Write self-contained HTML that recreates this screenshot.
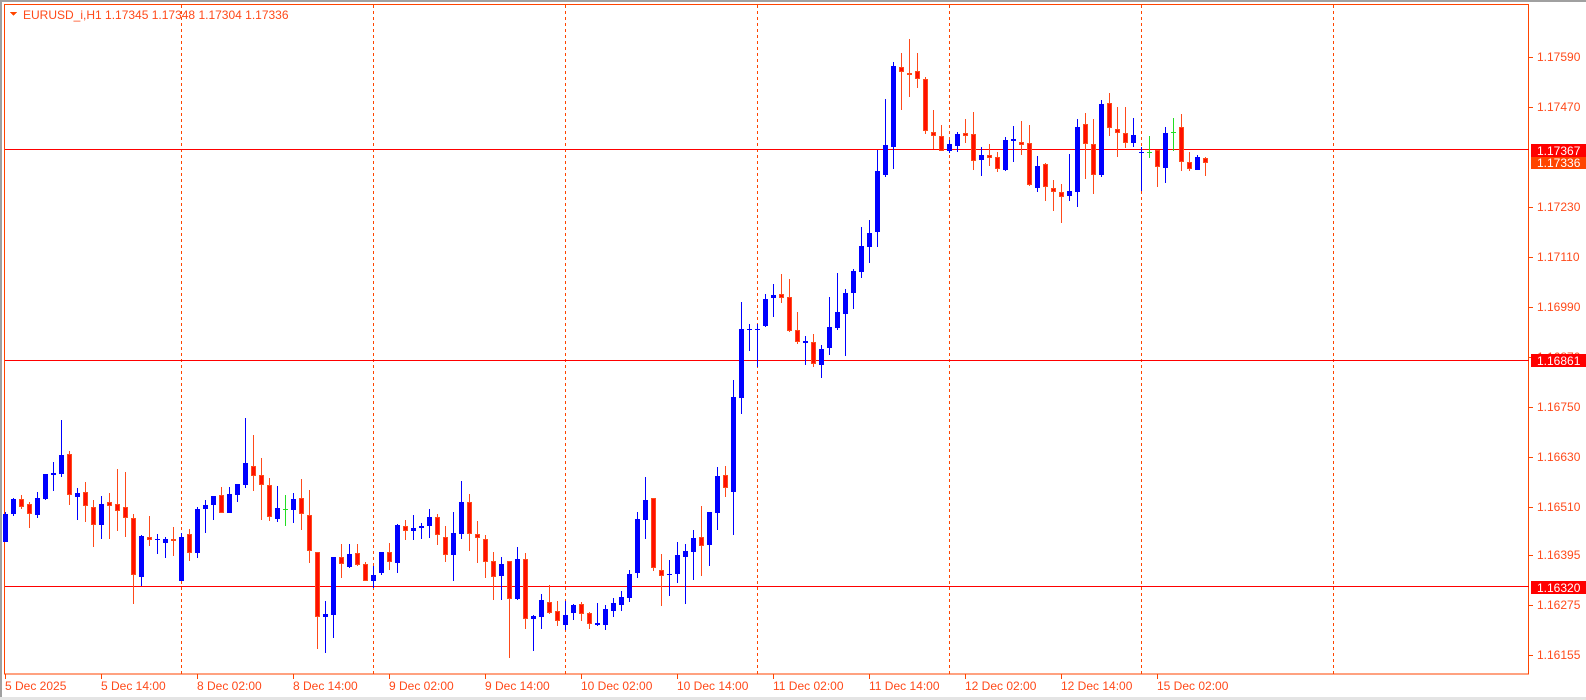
<!DOCTYPE html>
<html><head><meta charset="utf-8">
<style>
html,body{margin:0;padding:0;background:#fff;width:1586px;height:700px;overflow:hidden;}
svg{display:block;}
text{font-family:"Liberation Sans","DejaVu Sans",sans-serif;}
</style></head>
<body>
<svg id="c" width="1586" height="700" xmlns="http://www.w3.org/2000/svg" shape-rendering="crispEdges">
<rect x="0" y="0" width="1586" height="700" fill="#fff"/>
<rect x="0" y="0" width="1586" height="2" fill="#a0a0a0"/>
<rect x="0" y="0" width="2" height="700" fill="#a0a0a0"/>
<rect x="0" y="697" width="1586" height="3" fill="#e4e4e4"/>
<!-- frame -->
<rect x="4.5" y="4.5" width="1524" height="669.5" fill="none" stroke="#ff4500" stroke-width="1"/>
<!-- dashed verticals -->
<g stroke="#ff4500" stroke-width="1" stroke-dasharray="3,3">
<line x1="181.5" y1="5" x2="181.5" y2="674"/>
<line x1="373.5" y1="5" x2="373.5" y2="674"/>
<line x1="565.5" y1="5" x2="565.5" y2="674"/>
<line x1="757.5" y1="5" x2="757.5" y2="674"/>
<line x1="949.5" y1="5" x2="949.5" y2="674"/>
<line x1="1141.5" y1="5" x2="1141.5" y2="674"/>
<line x1="1333.5" y1="5" x2="1333.5" y2="674"/>
</g>
<!-- horizontal lines -->
<g stroke="#ff0000" stroke-width="1">
<line x1="5" y1="149.5" x2="1529" y2="149.5"/>
<line x1="5" y1="360.5" x2="1529" y2="360.5"/>
<line x1="5" y1="586.5" x2="1529" y2="586.5"/>
</g>
<g id="candles"></g>
<!-- title -->
<polygon points="10,12 17,12 13.5,16" fill="#ff4500"/>
<text x="23" y="19" font-size="12" fill="#ff4a1a">EURUSD_i,H1  1.17345 1.17348 1.17304 1.17336</text>
<!-- price axis -->
<g stroke="#ff4500">
<line x1="1529" y1="57.5" x2="1533" y2="57.5"/><line x1="1529" y1="107.5" x2="1533" y2="107.5"/>
<line x1="1529" y1="207.5" x2="1533" y2="207.5"/><line x1="1529" y1="257.5" x2="1533" y2="257.5"/>
<line x1="1529" y1="307.5" x2="1533" y2="307.5"/><line x1="1529" y1="357.5" x2="1533" y2="357.5"/>
<line x1="1529" y1="407.5" x2="1533" y2="407.5"/><line x1="1529" y1="457.5" x2="1533" y2="457.5"/>
<line x1="1529" y1="507.5" x2="1533" y2="507.5"/><line x1="1529" y1="555.5" x2="1533" y2="555.5"/>
<line x1="1529" y1="605.5" x2="1533" y2="605.5"/><line x1="1529" y1="655.5" x2="1533" y2="655.5"/>
</g>
<g font-size="12" fill="#ff4a1a">
<text x="1537" y="61">1.17590</text>
<text x="1537" y="111">1.17470</text>
<text x="1537" y="211">1.17230</text>
<text x="1537" y="261">1.17110</text>
<text x="1537" y="311">1.16990</text>
<text x="1537" y="361">1.16870</text>
<text x="1537" y="411">1.16750</text>
<text x="1537" y="461">1.16630</text>
<text x="1537" y="511">1.16510</text>
<text x="1537" y="559">1.16395</text>
<text x="1537" y="609">1.16275</text>
<text x="1537" y="659">1.16155</text>
</g>
<rect x="1531" y="144" width="55" height="13" fill="#ff0000"/>
<text x="1537" y="155" font-size="12" fill="#fff">1.17367</text>
<rect x="1531" y="157" width="55" height="12" fill="#ff4500"/>
<text x="1537" y="167" font-size="12" fill="#fff">1.17336</text>
<rect x="1531" y="354" width="55" height="13" fill="#ff0000"/>
<text x="1537" y="365" font-size="12" fill="#fff">1.16861</text>
<rect x="1531" y="581" width="55" height="13" fill="#ff0000"/>
<text x="1537" y="592" font-size="12" fill="#fff">1.16320</text>
<!-- time axis -->
<g stroke="#ff4500">
<line x1="5.5" y1="674" x2="5.5" y2="679"/><line x1="101.5" y1="674" x2="101.5" y2="679"/>
<line x1="197.5" y1="674" x2="197.5" y2="679"/><line x1="293.5" y1="674" x2="293.5" y2="679"/>
<line x1="389.5" y1="674" x2="389.5" y2="679"/><line x1="485.5" y1="674" x2="485.5" y2="679"/>
<line x1="581.5" y1="674" x2="581.5" y2="679"/><line x1="677.5" y1="674" x2="677.5" y2="679"/>
<line x1="773.5" y1="674" x2="773.5" y2="679"/><line x1="869.5" y1="674" x2="869.5" y2="679"/>
<line x1="965.5" y1="674" x2="965.5" y2="679"/><line x1="1061.5" y1="674" x2="1061.5" y2="679"/>
<line x1="1157.5" y1="674" x2="1157.5" y2="679"/>
</g>
<g font-size="12" fill="#ff4a1a">
<text x="5" y="690">5 Dec 2025</text>
<text x="101" y="690">5 Dec 14:00</text>
<text x="197" y="690">8 Dec 02:00</text>
<text x="293" y="690">8 Dec 14:00</text>
<text x="389" y="690">9 Dec 02:00</text>
<text x="485" y="690">9 Dec 14:00</text>
<text x="581" y="690">10 Dec 02:00</text>
<text x="677" y="690">10 Dec 14:00</text>
<text x="773" y="690">11 Dec 02:00</text>
<text x="869" y="690">11 Dec 14:00</text>
<text x="965" y="690">12 Dec 02:00</text>
<text x="1061" y="690">12 Dec 14:00</text>
<text x="1157" y="690">15 Dec 02:00</text>
</g>
</svg>
<script>
var D="b512,514,542,542;b498,499,514,516;r495,499,507,509;r502,504,514,528;b492,498,515,518;b474,474,499,500;b462,473,475,491;b420,455,474,477;r451,454,495,505;b488,493,497,520;r482,492,506,522;r500,507,525,547;b496,504,525,539;r493,502,506,539;r469,504,511,531;r472,507,518,537;r514,518,575,604;b535,536,577,586;r516,537,540,546;b534,539,540,554;b537,539,543,558;r527,539,540,556;b533,537,581,581;r529,534,553,561;b507,509,553,558;b500,505,509,533;b496,496,505,520;r487,495,513,513;b487,494,513,513;b484,484,495,502;b418,463,485,488;r435,466,476,491;r458,475,485,520;r478,485,517,521;b486,508,519,522;g495,509,509,526;b493,499,510,523;r479,498,514,530;r490,515,551,563;r552,552,617,649;b601,614,617,653;b557,557,615,638;r544,557,564,578;b544,554,567,568;r544,553,565,566;r562,564,581,581;b566,575,581,588;b552,552,573,575;r543,552,562,570;b524,525,563,573;r520,526,531,540;b515,528,531,540;b523,526,528,539;b509,517,526,538;r514,517,535,545;r526,537,555,562;b512,533,555,581;b481,502,534,539;r494,502,534,551;r521,534,538,563;r535,539,562,578;r552,561,577,600;b557,564,576,600;r561,561,599,658;b547,559,599,600;r553,559,619,629;b615,616,619,651;b594,600,617,629;r585,602,613,614;r601,611,621,626;b601,615,625,630;b604,605,613,620;r602,604,614,621;r612,613,624,629;b603,623,625,626;b605,609,625,630;b598,603,611,617;b591,597,605,611;b570,574,598,602;b512,519,573,578;b477,500,520,539;r498,498,568,571;r554,570,576,606;b560,574,575,596;b542,555,574,583;b544,551,557,604;b530,538,552,580;r506,537,546,576;b512,512,545,566;b467,476,513,530;r466,475,488,497;b380,397,492,535;b302,329,398,414;b324,329,329,351;b324,329,329,367;b294,299,326,327;b284,295,298,317;r274,294,298,303;r279,297,331,332;r312,330,342,344;b336,341,343,365;r334,342,364,367;b345,349,365,378;b297,327,348,355;b273,312,328,330;b289,293,314,356;b269,271,293,309;b227,246,272,278;b220,233,247,263;b150,171,232,247;b99,145,175,177;b62,66,147,169;r53,67,72,110;r39,73,73,97;r53,71,79,88;r77,79,131,134;r110,132,136,149;r125,136,151,151;b140,144,151,153;b132,134,146,152;r119,133,136,143;r112,134,161,170;b147,155,160,176;r144,155,158,166;r152,157,169,172;b137,140,170,171;b126,139,141,162;r121,142,145,155;r125,143,185,186;b156,166,188,192;r163,164,187,201;r180,188,192,211;r184,192,197,223;b154,191,196,201;b119,127,192,207;r113,124,144,179;r119,144,175,194;b100,104,175,177;r93,103,128,136;r107,129,133,157;r107,133,143,148;b118,135,143,147;b147,152,153,191;g136,152,152,158;r150,150,167,187;b127,133,168,183;g118,132,132,151;r114,127,162,171;r152,162,169,171;b155,157,170,170;r157,158,163,176";
var NS="http://www.w3.org/2000/svg",g=document.getElementById("candles"),s="";
D.split(";").forEach(function(e,k){
 var c=e[0],v=e.slice(1).split(",").map(Number),h=v[0],t=v[1],b=v[2],l=v[3];
 var x=5+8*k;
 var wc=c=="b"?"#0000ff":(c=="g"?"#22dd22":"#ff4a1a");
 s+='<rect x="'+x+'" y="'+h+'" width="1" height="'+Math.max(l-h,1)+'" fill="'+wc+'"/>';
 var hh=b-t;
 if(hh<=1){s+='<rect x="'+(x-2)+'" y="'+t+'" width="5" height="'+(c=="r"?2:1)+'" fill="'+wc+'"/>';}
 else if(c=="r"){s+='<rect x="'+(x-2)+'" y="'+t+'" width="5" height="'+hh+'" fill="#ff4a1a"/><rect x="'+(x-1)+'" y="'+(t+1)+'" width="3" height="'+Math.max(hh-2,1)+'" fill="#ff1000"/>';}
 else {s+='<rect x="'+(x-2)+'" y="'+t+'" width="5" height="'+hh+'" fill="'+wc+'"/>';}
});
g.innerHTML=s;
</script>
</body></html>
